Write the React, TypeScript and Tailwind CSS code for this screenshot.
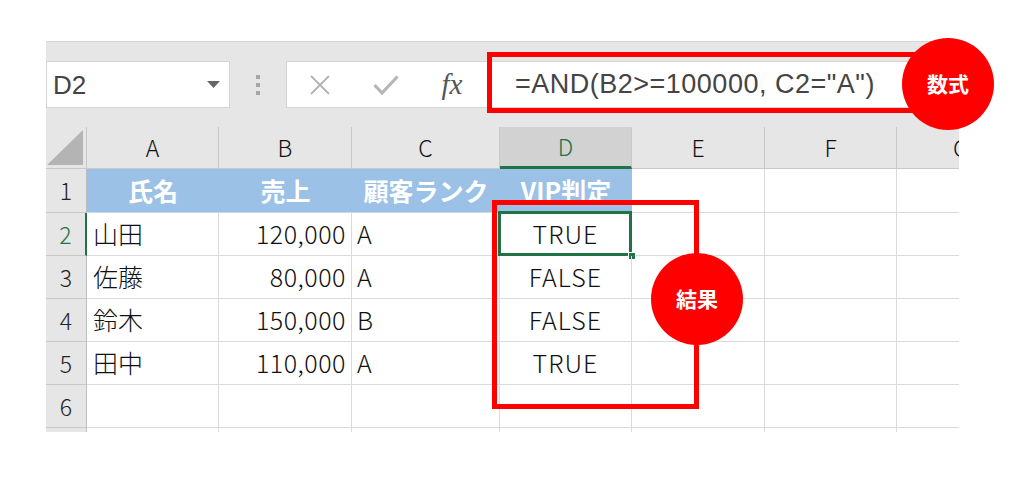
import React from "react";

const data: string[][] = [
  ["山田", "120,000", "A", "TRUE"],
  ["佐藤", "80,000", "A", "FALSE"],
  ["鈴木", "150,000", "B", "FALSE"],
  ["田中", "110,000", "A", "TRUE"],
];

const letters = ["A", "B", "C", "D", "E", "F"];

function RowHeader({ n, active }: { n: string; active?: boolean }) {
  return (
    <div
      className={
        active
          ? "bg-[#e6e6e6] border-b border-b-[#c8c8c8] border-r-2 border-r-[#217346] flex items-center justify-center text-[23px] text-[#217346] font-['Noto_Sans_CJK_JP',sans-serif] font-light"
          : "bg-[#e6e6e6] border-b border-b-[#c8c8c8] border-r border-r-[#bdbdbd] flex items-center justify-center text-[23px] text-[#222222] font-['Noto_Sans_CJK_JP',sans-serif] font-light"
      }
    >
      {n}
    </div>
  );
}

export default function App() {
  return (
    <div className="relative w-[1024px] h-[490px] bg-white overflow-hidden">
      <div className="ml-[46px] mt-[41px] w-[913px]">
        {/* formula toolbar */}
        <div className="h-[86px] bg-[#e6e6e6] border-t border-[#d6d6d6] flex items-start pt-[19px]">
          <div className="w-[184px] h-[47px] bg-white border border-[#d4d4d4] flex items-center justify-between pl-[6px] pr-[9px]">
            <span className="text-[26px] text-[#444444] font-['Liberation_Sans',sans-serif] leading-none">D2</span>
            <svg width="13" height="7" viewBox="0 0 13 7">
              <path d="M0 0 L13 0 L6.5 7 Z" fill="#666666" />
            </svg>
          </div>
          <div className="w-[56px] h-[47px] flex flex-col items-center justify-center gap-[4px]">
            <div className="w-[4px] h-[4px] bg-[#a6a6a6]" />
            <div className="w-[4px] h-[4px] bg-[#a6a6a6]" />
            <div className="w-[4px] h-[4px] bg-[#a6a6a6]" />
          </div>
          <div className="flex-1 h-[47px] bg-white border border-[#d4d4d4] flex items-center">
            <div className="w-[66px] flex justify-center">
              <svg width="22" height="20" viewBox="0 0 22 20">
                <path d="M2 1 L20 19 M20 1 L2 19" stroke="#b5b5b5" strokeWidth="2" fill="none" />
              </svg>
            </div>
            <div className="w-[66px] flex justify-center">
              <svg width="26" height="20" viewBox="0 0 26 20">
                <path d="M1.5 10 L9 18 L24.5 1.5" stroke="#b5b5b5" strokeWidth="3.2" fill="none" />
              </svg>
            </div>
            <div className="w-[66px] flex justify-center">
              <span className="text-[29px] italic text-[#555555] font-['Liberation_Serif',serif] leading-none">fx</span>
            </div>
            <div className="ml-[30px] text-[27px] tracking-[0.5px] text-[#444444] font-['Liberation_Sans',sans-serif] leading-none whitespace-nowrap">
              =AND(B2&gt;=100000, C2="A")
            </div>
          </div>
        </div>

        {/* sheet */}
        <div className="grid grid-cols-[41px_132px_133px_148px_132px_133px_132px_62px] grid-rows-[42px_44px_43px_43px_43px_43px_43px_4px]">
          {/* header row */}
          <div className="bg-[#e6e6e6] border-r border-b border-[#c8c8c8] flex items-end justify-end pr-[3px] pb-[3px]">
            <svg width="36" height="35" viewBox="0 0 36 35">
              <path d="M36 0 L36 35 L0 35 Z" fill="#b4b4b4" />
            </svg>
          </div>
          {letters.map((l) =>
            l === "D" ? (
              <div
                key={l}
                className="bg-[#d2d2d2] border-r border-r-[#c8c8c8] border-b-[3px] border-b-[#217346] flex items-center justify-center text-[23px] text-[#217346] font-['Noto_Sans_CJK_JP',sans-serif] font-light"
              >
                {l}
              </div>
            ) : (
              <div
                key={l}
                className="bg-[#e6e6e6] border-r border-b border-[#c8c8c8] flex items-center justify-center text-[23px] text-[#111111] font-['Noto_Sans_CJK_JP',sans-serif] font-light"
              >
                {l}
              </div>
            )
          )}
          <div className="bg-[#e6e6e6] border-b border-[#c8c8c8] overflow-hidden flex items-center pl-[56px] text-[23px] text-[#111111] font-['Noto_Sans_CJK_JP',sans-serif] font-light">
            G
          </div>

          {/* row 1 */}
          <RowHeader n="1" />
          {["氏名", "売上", "顧客ランク", "VIP判定"].map((t) => (
            <div
              key={t}
              className="bg-[#9bc2e6] border-b border-b-[#c9d9e8] flex items-center justify-center text-[25px] font-bold text-white font-['Noto_Sans_CJK_JP',sans-serif]"
            >
              {t}
            </div>
          ))}
          <div className="border-r border-b border-[#dadada]" />
          <div className="border-r border-b border-[#dadada]" />
          <div className="border-b border-[#dadada]" />

          {/* data rows */}
          {data.map((r, i) => (
            <React.Fragment key={i}>
              <RowHeader n={String(i + 2)} active={i === 0} />
              <div className="border-r border-b border-[#dadada] flex items-center pl-[6px] text-[25px] text-[#111111] font-['Noto_Sans_CJK_JP',sans-serif] font-light">
                {r[0]}
              </div>
              <div className="border-r border-b border-[#dadada] flex items-center justify-end pr-[5px] text-[25px] tracking-[0.5px] text-[#111111] font-['Noto_Sans_CJK_JP',sans-serif] font-light">
                {r[1]}
              </div>
              <div className="border-r border-b border-[#dadada] flex items-center pl-[5px] text-[25px] text-[#111111] font-['Noto_Sans_CJK_JP',sans-serif] font-light">
                {r[2]}
              </div>
              <div className="relative border-r border-b border-[#dadada] flex items-center justify-center text-[25px] tracking-[1px] text-[#111111] font-['Noto_Sans_CJK_JP',sans-serif] font-light">
                {r[3]}
                {i === 0 && (
                  <>
                    <div className="absolute -left-[2px] -top-[2px] -right-[1px] -bottom-[1px] border-[3px] border-[#217346]" />
                    <div className="absolute -right-[5px] -bottom-[5px] w-[8px] h-[8px] bg-[#217346] border border-white" />
                  </>
                )}
              </div>
              <div className="border-r border-b border-[#dadada]" />
              <div className="border-r border-b border-[#dadada]" />
              <div className="border-b border-[#dadada]" />
            </React.Fragment>
          ))}

          {/* row 6 */}
          <RowHeader n="6" />
          <div className="border-r border-b border-[#dadada]" />
          <div className="border-r border-b border-[#dadada]" />
          <div className="border-r border-b border-[#dadada]" />
          <div className="border-r border-b border-[#dadada]" />
          <div className="border-r border-b border-[#dadada]" />
          <div className="border-r border-b border-[#dadada]" />
          <div className="border-b border-[#dadada]" />

          {/* sliver row */}
          <div className="bg-[#e6e6e6] border-r border-[#bdbdbd]" />
          <div className="border-r border-[#dadada]" />
          <div className="border-r border-[#dadada]" />
          <div className="border-r border-[#dadada]" />
          <div className="border-r border-[#dadada]" />
          <div className="border-r border-[#dadada]" />
          <div className="border-r border-[#dadada]" />
          <div />
        </div>
      </div>

      {/* annotations */}
      <div className="absolute left-[487px] top-[52px] w-[450px] h-[61px] border-[5px] border-[#ff0000]" />
      <div className="absolute left-[902px] top-[38px] w-[92px] h-[92px] rounded-full bg-[#ff0000] flex items-center justify-center text-white text-[21px] font-bold font-['Noto_Sans_CJK_JP',sans-serif]">
        数式
      </div>
      <div className="absolute left-[492px] top-[200px] w-[207px] h-[209px] border-[5px] border-[#ff0000]" />
      <div className="absolute left-[651px] top-[253px] w-[92px] h-[92px] rounded-full bg-[#ff0000] flex items-center justify-center text-white text-[21px] font-bold font-['Noto_Sans_CJK_JP',sans-serif]">
        結果
      </div>
    </div>
  );
}
